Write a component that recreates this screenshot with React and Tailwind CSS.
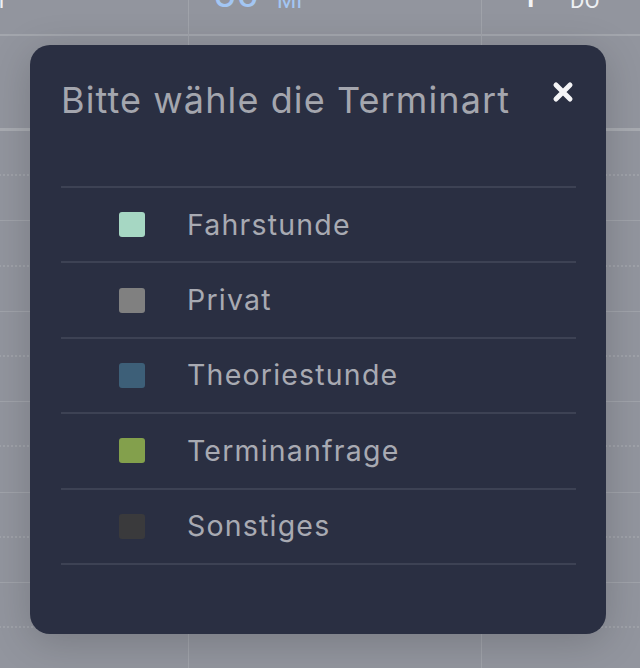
import React from "react";

const items = [
  { label: "Fahrstunde", color: "bg-[#a6d7c3]" },
  { label: "Privat", color: "bg-[#808080]" },
  { label: "Theoriestunde", color: "bg-[#3d5f78]" },
  { label: "Terminanfrage", color: "bg-[#83a04c]" },
  { label: "Sonstiges", color: "bg-[#3a3a3c]" },
];

const days = [
  { num: "29", label: "DI", numColor: "text-[#f2f3f5]", labelColor: "text-[#eef0f3]", border: true },
  { num: "30", label: "MI", numColor: "text-[#a3c6f3]", labelColor: "text-[#a3c6f3]", border: true },
  { num: "1", label: "DO", numColor: "text-[#f2f3f5]", labelColor: "text-[#eef0f3]", border: false },
];

function Column({ day }) {
  const rows = Array.from({ length: 12 });
  return (
    <div className={`w-[293px] shrink-0 flex flex-col ${day.border ? "border-r border-[#a0a3aa]" : ""}`}>
      <div className="h-[36px] shrink-0 border-b-2 border-[#a3a6ad] overflow-hidden flex items-start">
        <div className="flex items-end -mt-[26px] pl-[24px]" style={{ fontFamily: "Roboto, 'Liberation Sans', sans-serif" }}>
          <span className={`w-[47px] text-center text-[40px] leading-[40px] font-normal ${day.numColor}`}>{day.num}</span>
          <span className={`ml-[17px] text-[22px] leading-[24px] mb-[1px] ${day.labelColor}`}>{day.label}</span>
        </div>
      </div>
      <div className="h-[95px] shrink-0 border-b-[3px] border-[#a8abb1]" />
      {rows.map((_, i) => (
        <div
          key={i}
          className={`h-[45.2px] shrink-0 ${i % 2 === 0 ? "border-b-2 border-dotted border-[#9fa2a9]" : "border-b border-[#a0a3aa]"}`}
        />
      ))}
    </div>
  );
}

export default function App() {
  return (
    <div className="relative w-[640px] h-[668px] overflow-hidden bg-[#92959e]">
      <div className="flex ml-[-104px]">
        {days.map((d, i) => (
          <Column key={i} day={d} />
        ))}
      </div>

      <div
        className="absolute left-[30px] top-[45px] w-[576px] h-[589px] rounded-[20px] bg-[#2a2f42] pl-[31px] pr-[30px] shadow-[0_8px_40px_rgba(0,0,0,0.18)]"
        style={{ fontFamily: "Inter, 'Noto Sans', sans-serif" }}
      >
        <div className="h-[141px] flex justify-between items-start pt-[35px]">
          <h2 className="text-[36px] leading-[40px] font-normal text-[#a4a6ae] tracking-[1.1px] whitespace-nowrap">
            Bitte wähle die Terminart
          </h2>
          <button className="w-[22px] h-[22px] mt-[0.5px] mr-[2.5px] flex items-center justify-center shrink-0">
            <svg width="22" height="22" viewBox="0 0 22 22">
              <path d="M4 4 L18 18 M18 4 L4 18" stroke="#f4f4f6" strokeWidth="5" strokeLinecap="round" />
            </svg>
          </button>
        </div>
        <div className="border-b-2 border-[#3d4254]">
          {items.map((it) => (
            <div key={it.label} className="h-[75.4px] border-t-2 border-[#3d4254] flex items-center pl-[58px]">
              <div className={`w-[26px] h-[25px] rounded-[3px] ${it.color} shrink-0`} />
              <span className="ml-[42px] text-[28.5px] leading-[32px] tracking-[1.2px] text-[#a8aab2]">{it.label}</span>
            </div>
          ))}
        </div>
      </div>
    </div>
  );
}
